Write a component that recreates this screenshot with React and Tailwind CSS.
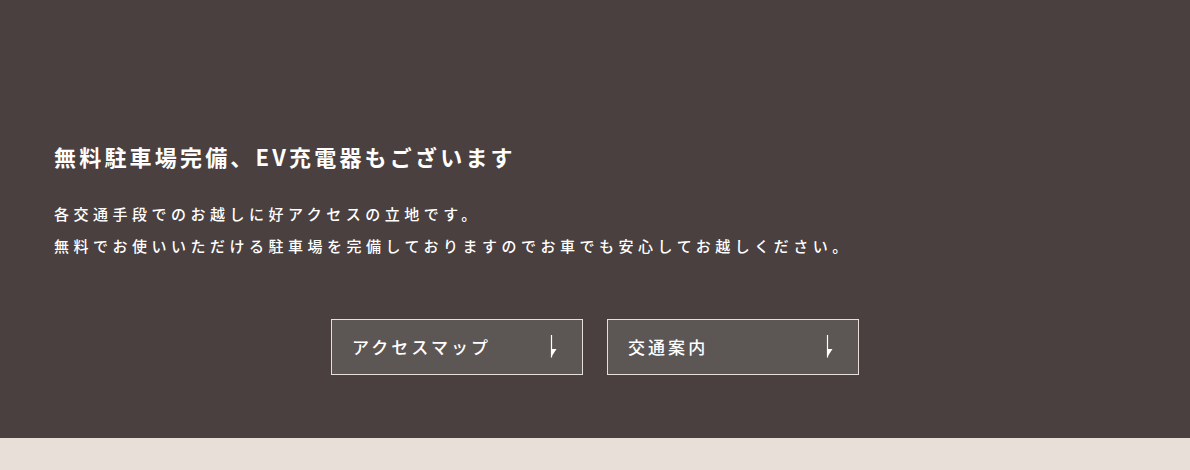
import React from 'react';

const links = [
  { label: 'アクセスマップ', href: '#access-map' },
  { label: '交通案内', href: '#transport' },
];

const DownArrow = () => (
  <svg width="8" height="24" viewBox="0 0 8 24" className="shrink-0" aria-hidden="true">
    <line x1="1.5" y1="0" x2="1.5" y2="22.5" stroke="#ffffff" strokeWidth="1.2" />
    <polygon points="1,14 6.5,14 1,22.5" fill="#ffffff" />
  </svg>
);

export default function App() {
  return (
    <div
      className="w-full"
      style={{ fontFamily: '"Noto Sans CJK JP", "Noto Sans", sans-serif' }}
    >
      <section className="bg-[#4a403f] px-[54px] pb-[63px] pt-[140px] text-white">
        <h2 className="m-0 text-[22px] font-bold leading-[32px] tracking-[0.145em]">
          無料駐車場完備、EV充電器もございます
        </h2>
        <p className="mt-[26px] text-[15px] font-medium leading-[32px] tracking-[0.3em]">
          各交通手段でのお越しに好アクセスの立地です。
          <br />
          無料でお使いいただける駐車場を完備しておりますのでお車でも安心してお越しください。
        </p>

        <div className="mt-[57px] flex justify-center gap-6">
          {links.map((item) => (
            <a
              key={item.label}
              href={item.href}
              className="flex h-[56px] w-[252px] items-center justify-between border border-[#e8e0d8] bg-[#5c5655] pl-5 pr-[24px] text-white"
            >
              <span className="text-[17px] font-medium tracking-[0.18em]">{item.label}</span>
              <DownArrow />
            </a>
          ))}
        </div>
      </section>
      <div className="h-8 bg-[#e8e0d8]" />
    </div>
  );
}
